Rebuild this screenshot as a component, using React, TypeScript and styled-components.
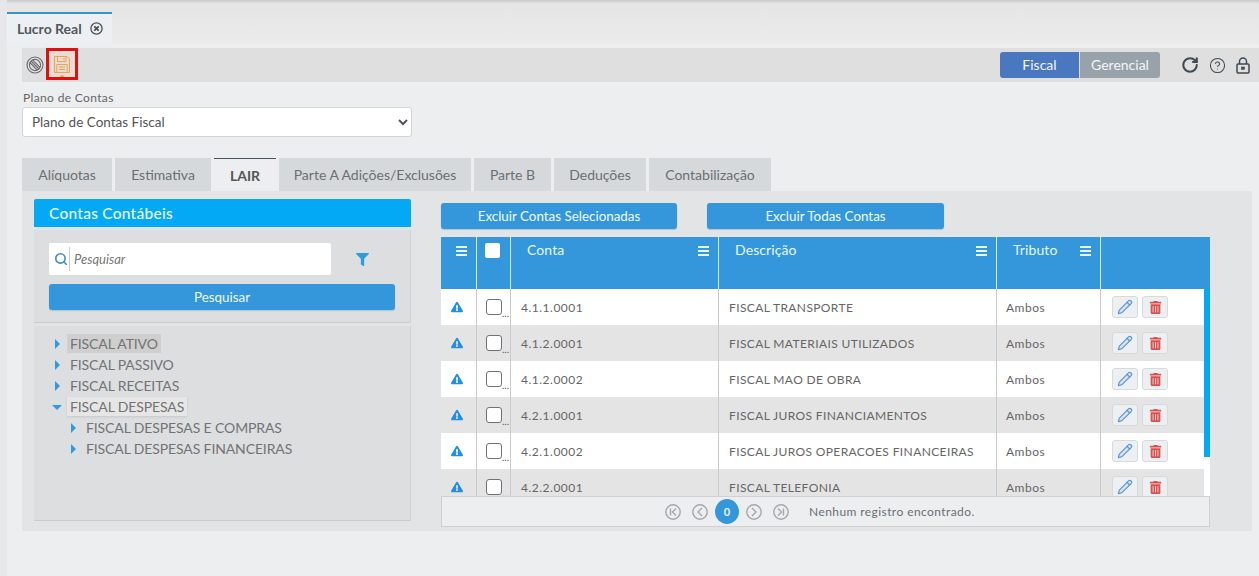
import React from "react";
import styled, { createGlobalStyle } from "styled-components";
import { FaExclamationTriangle, FaFilter, FaTrashAlt } from "react-icons/fa";
import { Pencil, Search, RotateCw, CircleHelp } from "lucide-react";

const Global = createGlobalStyle`
  html, body { margin: 0; padding: 0; height: 576px; overflow: hidden; background: #edeef0; }
  body { font-family: Lato, "Open Sans", sans-serif; color: #666; }
  * { box-sizing: border-box; }
`;
const Page = styled.div`
  width: 1259px; height: 576px; overflow: hidden; display: flex; flex-direction: column;
  padding-top: 3px; padding-left: 7px;
  background: linear-gradient(#c9c9c9 0, #dfdfdf 3px, #edeef0 3px);
  background-color: #edeef0;
  box-shadow: inset 7px 0 0 #e6e7e9;
`;
const TabStrip = styled.div`
  height: 41px; padding-top: 9px; display: flex; background: linear-gradient(#e5e5e5, #ebebeb);
`;
const DocTab = styled.div`
  width: 105px; height: 32px; border-top: 2px solid #3f8fc8; background: #edf0f2;
  display: flex; align-items: center; gap: 8px; padding: 0 0 2px 10px;
  font-size: 14px; font-weight: 700; color: #4f5962; letter-spacing: 0;
`;
const StopIcon = styled.svg` width: 18px; height: 18px; `;
const Toolbar = styled.div`
  margin: 4px 0 0 15px; height: 34px; background: #dfdfdf; display: flex; align-items: center; padding-left: 4px;
`;
const SaveBox = styled.div`
  width: 32px; height: 32px; margin: 0 0 0 2px; border: 3px solid #e0100f; display: flex; align-items: center;
  justify-content: center; background: #e6ddd4; align-self: flex-start; position: relative; padding-top: 1px;
`;
const SaveDot = styled.span`
  position: absolute; left: 11px; bottom: 0; width: 4px; height: 2px; background: #f0a050; border-radius: 2px 2px 0 0;
`;
const ToolbarEnd = styled.div` margin-left: auto; display: flex; align-items: center; `;
const Toggle = styled.div<{ $on?: boolean }>`
  height: 26px; display: flex; align-items: center; justify-content: center; color: #f4f6f8; font-size: 14px;
  padding-bottom: 1px;
  width: ${p => (p.$on ? "79px" : "80px")};
  background: ${p => (p.$on ? "#4a78c0" : "#98a2aa")};
  border-radius: ${p => (p.$on ? "3px 0 0 3px" : "0 3px 3px 0")};
  margin-left: ${p => (p.$on ? "0" : "1px")};
`;
const ToolIcons = styled.div`
  display: flex; align-items: center; gap: 10px; margin: 0 9px 0 21px; color: #3f4a54;
`;
const FieldLabel = styled.div`
  margin: 8px 0 0 16px; font-size: 12px; line-height: 15px; letter-spacing: .35px; color: #666;
`;
const SelectBox = styled.select`
  display: block; margin: 2px 0 0 15px; width: 390px; height: 30px; padding: 0 4px 0 5px; border: 1px solid #d2d4d6;
  border-radius: 3px; background: #fff; font: 13.5px Lato, sans-serif; color: #555;
`;
const TabRow = styled.div` display: flex; gap: 3px; margin: 21px 0 0 15px; height: 33px; `;
const Tab = styled.div<{ $on?: boolean; $w: number }>`
  width: ${p => p.$w}px; display: flex; align-items: center; justify-content: center; font-size: 14px; letter-spacing: 0;
  background: ${p => (p.$on ? "#edeef0" : "#d6d9db")};
  color: ${p => (p.$on ? "#555" : "#6b6f73")};
  font-weight: ${p => (p.$on ? 700 : 400)};
  border-top: ${p => (p.$on ? "1px solid #47525c" : "0")};
`;
const Panel = styled.div`
  margin-left: 15px; width: 1230px; height: 340px; background: #e2e4e6; display: flex; padding: 8px 0 0 12px;
`;
const LeftCol = styled.div` width: 377px; display: flex; flex-direction: column; `;
const LeftHead = styled.div`
  height: 28px; background: #03a9f4; color: #e8fbff; font-size: 15.5px; font-weight: 500; letter-spacing: .25px;
  display: flex; align-items: center; padding-left: 15px; border-radius: 2px 2px 0 0;
`;
const SearchCard = styled.div`
  margin-top: 3px; height: 93px; background: #dcdee0; border-bottom: 1px solid #ccc; border-right: 1px solid #d2d2d2;
  padding: 13px 15px 0;
`;
const SearchRow = styled.div` display: flex; align-items: center; `;
const SearchInput = styled.div`
  width: 282px; height: 32px; background: #fff; border-radius: 2px; display: flex; align-items: center; padding-left: 5px;
`;
const SearchDivider = styled.div` width: 1px; height: 24px; background: #ccc; margin: 0 4px 0 1px; `;
const Placeholder = styled.span` font-size: 13px; font-style: italic; color: #777; `;
const FilterWrap = styled.div` margin-left: 25px; color: #2d9be0; display: flex; `;
const BlueButton = styled.button<{ $w: number }>`
  width: ${p => p.$w}px; height: 26px; border: 0; border-radius: 3px; background: #3597db; color: #eefbfd;
  font: 13.4px Lato, sans-serif; padding: 0; box-shadow: 0 1px 1px #b4c2cc;
`;
const SearchSubmit = styled(BlueButton)` display: block; margin-top: 9px; `;
const TreeCard = styled.div`
  margin-top: 3px; height: 195px; background: #dcdee0; border-bottom: 1px solid #ccc; border-right: 1px solid #d2d2d2;
  padding: 7px 0 0 20px;
`;
const TreeRow = styled.div<{ $sub?: boolean }>`
  height: 21px; display: flex; align-items: center; margin-left: ${p => (p.$sub ? "16px" : "0")};
`;
const TreeToggle = styled.svg<{ $open?: boolean }>`
  width: ${p => (p.$open ? "10px" : "8px")}; margin-left: ${p => (p.$open ? "-2px" : "0")}; height: 10px; flex: none;
`;
const TreeLabel = styled.span<{ $kind?: "sel" | "hover" }>`
  margin-left: ${p => (p.$kind ? "5px" : "8px")};
  padding: 0 ${p => (p.$kind ? "3px" : "0")};
  height: 19px; line-height: 19px; font-size: 14px; letter-spacing: -.12px; color: #727374;
  background: ${p => (p.$kind === "sel" ? "#cfcfcf" : p.$kind === "hover" ? "#e6e6e6" : "transparent")};
  box-shadow: ${p => (p.$kind === "hover" ? "0 1px 2px #c8c8c8" : "none")};
`;
const RightCol = styled.div` margin-left: 30px; width: 769px; display: flex; flex-direction: column; padding-top: 4px; `;
const ActionRow = styled.div` display: flex; gap: 30px; `;
const Table = styled.div` margin-top: 8px; height: 290px; display: flex; flex-direction: column; position: relative; `;
const cols = "36px 34px 208px 278px 104px 109px";
const HeadRow = styled.div`
  height: 52px; flex: none; display: grid; grid-template-columns: ${cols}; background: #3597db;
`;
const HeadCell = styled.div<{ $last?: boolean }>`
  position: relative; border-right: ${p => (p.$last ? "0" : "1px solid #d5e6f1")}; color: #e6f8fc; font-size: 14px;
  letter-spacing: .1px; padding: 4px 0 0 16px; line-height: 17px;
`;
const MenuBars = styled.svg`
  position: absolute; right: 9px; top: 9px; width: 11px; height: 10px;
`;
const HeadCheck = styled.div`
  width: 15px; height: 15px; background: #fff; border-radius: 2px; margin: 2px 0 0 -8px;
`;
const Body = styled.div` flex: 1; overflow: hidden; position: relative; background: #fff; `;
const Row = styled.div<{ $alt: boolean }>`
  height: 36px; display: grid; grid-template-columns: ${cols}; background: ${p => (p.$alt ? "#e4e4e4" : "#fff")};
  width: 763px;
`;
const Cell = styled.div<{ $last?: boolean }>`
  border-right: ${p => (p.$last ? "0" : "1px solid #c9cbcd")}; display: flex; align-items: center; padding-left: 10px;
  font-size: 12px; letter-spacing: .5px; color: #666;
`;
const WarnCell = styled(Cell)` color: #2490dd; padding-left: 10px; padding-bottom: 1px; `;
const CheckCell = styled(Cell)` padding: 0 0 0 9px; align-items: flex-start; position: relative; overflow: hidden; `;
const RowCheck = styled.div`
  margin-top: 10px; width: 16px; height: 16px; border: 1px solid #6d7278; background: #fff; border-radius: 3px; flex: none;
`;
const Dots = styled.span` font-size: 10px; line-height: 1; margin-top: 19px; letter-spacing: 0; color: #555; `;
const DescCell = styled(Cell)` letter-spacing: .38px; font-size: 12px; `;
const TributeCell = styled(Cell)` padding-left: 9px; `;
const IconBtn = styled.div<{ $del?: boolean }>`
  width: 26px; height: 22px; border: 1px solid #d8d9da; border-radius: 3px; background: #edf0f2; display: flex;
  align-items: center; justify-content: center; margin-right: 4px;
  color: ${p => (p.$del ? "#d9504f" : "#5f93d0")};
`;
const ActionCell = styled(Cell)` padding-left: 11px; `;
const ScrollThumb = styled.div`
  position: absolute; right: 0; top: 0; width: 6px; height: 168px; background: #03a9f4;
`;
const Pager = styled.div`
  height: 31px; flex: none; background: #edeef0; border: 1px solid #cfd0d1; display: flex; align-items: center;
  padding-left: 223px; gap: 7px; position: relative;
`;
const PagerGroup = styled.div` display: flex; gap: 11px; `;
const PageBubble = styled.div`
  width: 24px; height: 25px; border-radius: 50%; background: #3597db; color: #e8f5fb; font-size: 11px; font-weight: 700;
  display: flex; align-items: center; justify-content: center;
`;
const PagerText = styled.span` margin-left: 13px; font-size: 12px; letter-spacing: .42px; color: #6b6e70; `;

const Bars = () => (
  <MenuBars viewBox="0 0 11 10"><path d="M0 1h11M0 5h11M0 9h11" stroke="#e8f7fb" strokeWidth="1.8" /></MenuBars>
);
const Arrow = ({ open }: { open?: boolean }) =>
  open ? (
    <TreeToggle $open viewBox="0 0 10 10"><path d="M0 3h10L5 8z" fill="#2d9be0" /></TreeToggle>
  ) : (
    <TreeToggle viewBox="0 0 8 10"><path d="M1 0l5 5-5 5z" fill="#2d9be0" /></TreeToggle>
  );
const PagerIcon = ({ d }: { d: string }) => (
  <svg width="16" height="16" viewBox="0 0 16 16" fill="none" stroke="#a4a8ac" strokeWidth="1.4">
    <circle cx="8" cy="8" r="7.2" /><path d={d} />
  </svg>
);

const tabs: [string, number, boolean?][] = [
  ["Alíquotas", 90], ["Estimativa", 96], ["LAIR", 62, true], ["Parte A Adições/Exclusões", 192],
  ["Parte B", 77], ["Deduções", 92], ["Contabilização", 122],
];
const rows = [
  ["4.1.1.0001", "FISCAL TRANSPORTE"], ["4.1.2.0001", "FISCAL MATERIAIS UTILIZADOS"],
  ["4.1.2.0002", "FISCAL MAO DE OBRA"], ["4.2.1.0001", "FISCAL JUROS FINANCIAMENTOS"],
  ["4.2.1.0002", "FISCAL JUROS OPERACOES FINANCEIRAS"], ["4.2.2.0001", "FISCAL TELEFONIA"],
];

export default function App() {
  return (
    <Page>
      <Global />
      <TabStrip>
        <DocTab>
          Lucro Real
          <svg width="13" height="13" viewBox="0 0 13 13" fill="none" stroke="#4a4f55">
            <circle cx="6.5" cy="6.5" r="5.6" strokeWidth="1.3" /><path d="M4.3 4.3l4.4 4.4M8.7 4.3l-4.4 4.4" strokeWidth="1.8" />
          </svg>
        </DocTab>
      </TabStrip>
      <Toolbar>
        <StopIcon viewBox="0 0 18 18" fill="none" stroke="#6a6a6a" strokeWidth="1.1">
          <circle cx="9" cy="9" r="8" /><circle cx="9" cy="9" r="5.6" /><path d="M5 5l8 8M3.8 6.5l7.8 7.8M6.5 3.8l7.8 7.8" />
        </StopIcon>
        <SaveBox>
          <svg width="16" height="17" viewBox="0 0 16 17" fill="none" stroke="#f0a050" strokeWidth="1">
            <path d="M.5.5h12.5l2.5 2.5v13.5H.5z" /><path d="M3.5.5v5h8.5v-5M10 1.8v2.2" /><path d="M2.8 16.5V8.5h10.4v8M5 11h6M5 13.5h6" />
          </svg>
          <SaveDot />
        </SaveBox>
        <ToolbarEnd>
          <Toggle $on>Fiscal</Toggle>
          <Toggle>Gerencial</Toggle>
          <ToolIcons>
            <RotateCw size={18} strokeWidth={2.8} />
            <CircleHelp size={17} strokeWidth={1.5} />
            <svg width="14" height="17" viewBox="0 0 14 17" fill="none" stroke="#3f4a54" strokeWidth="1.5">
              <rect x="1" y="7" width="12" height="9" rx="1" /><path d="M3.5 7V4.5a3.5 3.5 0 0 1 7 0V7" />
              <rect x="5.5" y="10" width="3" height="2.4" fill="#3f4a54" strokeWidth="0.6" />
            </svg>
          </ToolIcons>
        </ToolbarEnd>
      </Toolbar>
      <FieldLabel>Plano de Contas</FieldLabel>
      <SelectBox defaultValue="f"><option value="f">Plano de Contas Fiscal</option></SelectBox>
      <TabRow>
        {tabs.map(([t, w, on]) => <Tab key={t} $w={w} $on={on}>{t}</Tab>)}
      </TabRow>
      <Panel>
        <LeftCol>
          <LeftHead>Contas Contábeis</LeftHead>
          <SearchCard>
            <SearchRow>
              <SearchInput>
                <Search size={14} color="#3f8fc8" strokeWidth={2.8} />
                <SearchDivider />
                <Placeholder>Pesquisar</Placeholder>
              </SearchInput>
              <FilterWrap><FaFilter size={13} /></FilterWrap>
            </SearchRow>
            <SearchSubmit $w={346}>Pesquisar</SearchSubmit>
          </SearchCard>
          <TreeCard>
            <TreeRow><Arrow /><TreeLabel $kind="sel">FISCAL ATIVO</TreeLabel></TreeRow>
            <TreeRow><Arrow /><TreeLabel>FISCAL PASSIVO</TreeLabel></TreeRow>
            <TreeRow><Arrow /><TreeLabel>FISCAL RECEITAS</TreeLabel></TreeRow>
            <TreeRow><Arrow open /><TreeLabel $kind="hover">FISCAL DESPESAS</TreeLabel></TreeRow>
            <TreeRow $sub><Arrow /><TreeLabel>FISCAL DESPESAS E COMPRAS</TreeLabel></TreeRow>
            <TreeRow $sub><Arrow /><TreeLabel>FISCAL DESPESAS FINANCEIRAS</TreeLabel></TreeRow>
          </TreeCard>
        </LeftCol>
        <RightCol>
          <ActionRow>
            <BlueButton $w={236}>Excluir Contas Selecionadas</BlueButton>
            <BlueButton $w={237}>Excluir Todas Contas</BlueButton>
          </ActionRow>
          <Table>
            <HeadRow>
              <HeadCell><Bars /></HeadCell>
              <HeadCell><HeadCheck /></HeadCell>
              <HeadCell>Conta<Bars /></HeadCell>
              <HeadCell>Descrição<Bars /></HeadCell>
              <HeadCell>Tributo<Bars /></HeadCell>
              <HeadCell $last />
            </HeadRow>
            <Body>
              {rows.map(([c, d], i) => (
                <Row key={c} $alt={i % 2 === 1}>
                  <WarnCell><FaExclamationTriangle size={12} /></WarnCell>
                  <CheckCell><RowCheck /><Dots>...</Dots></CheckCell>
                  <Cell>{c}</Cell>
                  <DescCell>{d}</DescCell>
                  <TributeCell>Ambos</TributeCell>
                  <ActionCell $last>
                    <IconBtn><Pencil size={16} strokeWidth={1.7} fill="#d3e2f3" /></IconBtn>
                    <IconBtn $del><FaTrashAlt size={13} /></IconBtn>
                  </ActionCell>
                </Row>
              ))}
              <ScrollThumb />
            </Body>
            <Pager>
              <PagerGroup>
                <PagerIcon d="M5.5 4.5v7M11 4.5L7.5 8l3.5 3.5" />
                <PagerIcon d="M10 4L6 8l4 4" />
              </PagerGroup>
              <PageBubble>0</PageBubble>
              <PagerGroup>
                <PagerIcon d="M6 4l4 4-4 4" />
                <PagerIcon d="M5 4.5L8.5 8 5 11.5M10.5 4.5v7" />
              </PagerGroup>
              <PagerText>Nenhum registro encontrado.</PagerText>
            </Pager>
          </Table>
        </RightCol>
      </Panel>
    </Page>
  );
}
